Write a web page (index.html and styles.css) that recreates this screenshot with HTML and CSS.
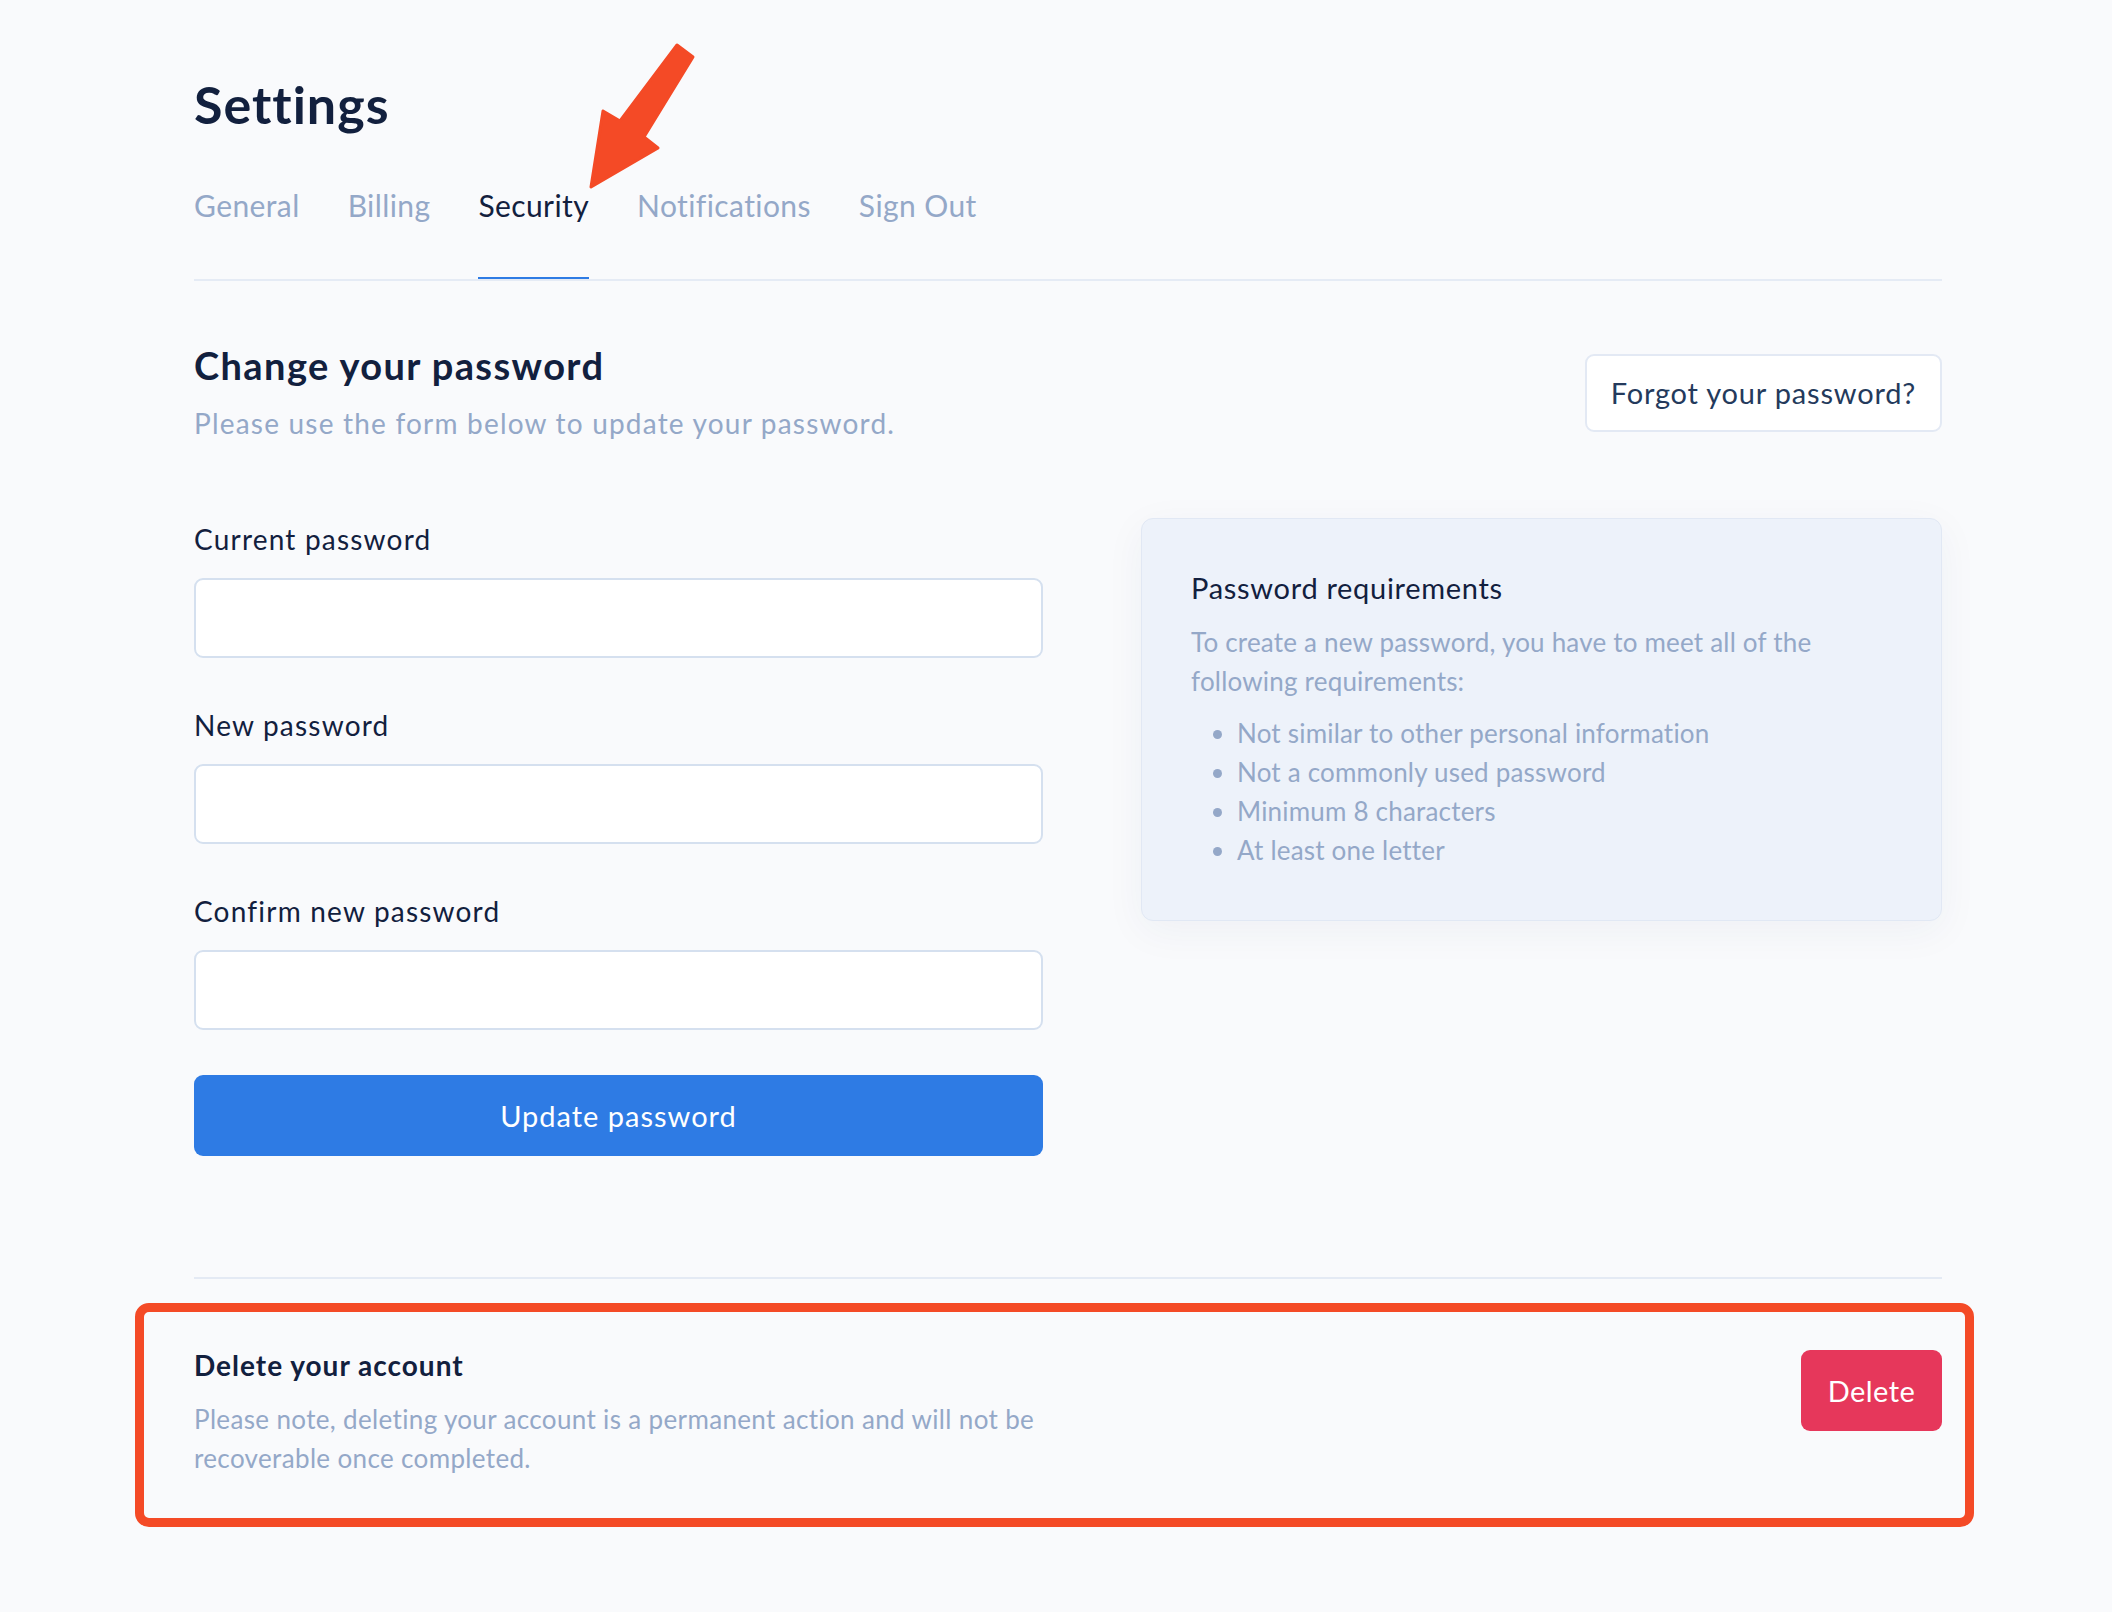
FILE: index.html
```html
<!DOCTYPE html>
<html lang="en">
<head>
<meta charset="utf-8">
<title>Settings</title>
<link rel="stylesheet" href="styles.css">
</head>
<body>
<div class="page">
  <h1 class="title">Settings</h1>
  <nav class="tabs">
    <a class="tab">General</a>
    <a class="tab">Billing</a>
    <a class="tab active">Security</a>
    <a class="tab">Notifications</a>
    <a class="tab">Sign Out</a>
  </nav>

  <div class="section-head">
    <div>
      <h2 class="section-title">Change your password</h2>
      <p class="section-sub">Please use the form below to update your password.</p>
    </div>
    <button class="btn-outline">Forgot your password?</button>
  </div>

  <div class="form-row">
    <form class="form">
      <label class="label">Current password</label>
      <input class="input" type="password">
      <label class="label">New password</label>
      <input class="input" type="password">
      <label class="label">Confirm new password</label>
      <input class="input" type="password">
      <button type="button" class="btn-primary">Update password</button>
    </form>
    <aside class="card">
      <h3 class="card-title">Password requirements</h3>
      <p class="card-text">To create a new password, you have to meet all of the following requirements:</p>
      <ul class="req-list">
        <li>Not similar to other personal information</li>
        <li>Not a commonly used password</li>
        <li>Minimum 8 characters</li>
        <li>At least one letter</li>
      </ul>
    </aside>
  </div>

  <hr class="divider">

  <div class="danger">
    <div class="danger-text">
      <h3 class="danger-title">Delete your account</h3>
      <p class="danger-sub">Please note, deleting your account is a permanent action and will not be recoverable once completed.</p>
    </div>
    <button class="btn-danger">Delete</button>
  </div>
</div>

<svg class="arrow" viewBox="570 30 140 170" width="140" height="170" aria-hidden="true">
  <polygon points="677,45 693,57 644,137 658,148 591,187 603,111 620,121" fill="#f44a26" stroke="#f44a26" stroke-width="3" stroke-linejoin="round"/>
</svg>
</body>
</html>
```

FILE: styles.css
```css
* { box-sizing: border-box; }

html, body {
  margin: 0;
  padding: 0;
  background: #f9fafc;
}

body {
  font-family: "Lato", "Open Sans", sans-serif;
  color: #12203e;
  position: relative;
  min-height: 1612px;
}

.page {
  width: 1748px;
  margin-left: 194px;
  padding-top: 74px;
}

.title {
  margin: 0;
  font-size: 52px;
  line-height: 60px;
  font-weight: 700;
  letter-spacing: 1px;
  color: #12203e;
}

.tabs {
  display: flex;
  gap: 48px;
  margin-top: 51px;
  border-bottom: 2px solid #e5ebf5;
}

.tab {
  font-size: 30px;
  line-height: 40px;
  letter-spacing: 0.4px;
  padding-bottom: 52px;
  border-bottom: 2px solid transparent;
  color: #94a8c8;
  cursor: pointer;
}

.tab.active {
  color: #12203e;
  border-bottom-color: #2e7be4;
}

.section-head {
  display: flex;
  justify-content: space-between;
  align-items: center;
  margin-top: 61px;
}

.section-title {
  margin: 0;
  font-size: 38px;
  line-height: 46px;
  font-weight: 700;
  letter-spacing: 1.4px;
  color: #12203e;
}

.section-sub {
  margin: 15px 0 0;
  font-size: 28px;
  line-height: 40px;
  letter-spacing: 1.2px;
  color: #94a8c8;
}

.btn-outline {
  font-family: inherit;
  font-size: 29px;
  line-height: 40px;
  letter-spacing: 0.8px;
  height: 78px;
  padding: 0 24px;
  background: #ffffff;
  border: 2px solid #e3e9f4;
  border-radius: 9px;
  color: #243a5c;
}

.form-row {
  display: flex;
  gap: 98px;
  align-items: flex-start;
  margin-top: 75px;
}

.form {
  width: 849px;
  display: flex;
  flex-direction: column;
}

.label {
  font-size: 28px;
  line-height: 40px;
  letter-spacing: 1.2px;
  color: #12203e;
  margin-top: 47px;
}

.label:first-child {
  margin-top: 1px;
}

.input {
  margin-top: 19px;
  height: 80px;
  border: 2px solid #d5e0ef;
  border-radius: 9px;
  background: #ffffff;
  font-family: inherit;
  font-size: 27px;
  padding: 0 20px;
}

.btn-primary {
  margin-top: 45px;
  height: 81px;
  border: none;
  border-radius: 9px;
  background: #2e7be4;
  color: #ffffff;
  font-family: inherit;
  font-size: 29px;
  letter-spacing: 1px;
}

.card {
  flex: 1;
  background: #edf2fa;
  border: 1px solid #e1e8f4;
  border-radius: 12px;
  padding: 49px 49px 50px;
  box-shadow: 0 10px 40px rgba(30, 50, 90, 0.05);
}

.card-title {
  margin: 0;
  font-size: 29px;
  line-height: 40px;
  font-weight: 400;
  letter-spacing: 0.7px;
  color: #12203e;
}

.card-text {
  margin: 15px 0 0;
  font-size: 26px;
  line-height: 38.5px;
  letter-spacing: 0.2px;
  color: #94a8c8;
}

.req-list {
  margin: 14px 0 0;
  padding-left: 46px;
  font-size: 26px;
  line-height: 39px;
  letter-spacing: 0.2px;
  color: #94a8c8;
}

.divider {
  margin: 121px 0 0;
  border: none;
  border-top: 2px solid #e4eaf4;
}

.danger {
  position: relative;
  display: flex;
  justify-content: space-between;
  align-items: flex-start;
  margin-top: 66px;
}

.danger::after {
  content: "";
  position: absolute;
  top: -42px;
  left: -59px;
  right: -32px;
  bottom: -49px;
  border: 9px solid #f44a26;
  border-radius: 14px;
  pointer-events: none;
}

.danger-text {
  width: 870px;
}

.danger-title {
  margin: 0;
  font-size: 28px;
  line-height: 40px;
  font-weight: 700;
  letter-spacing: 1px;
  color: #12203e;
}

.danger-sub {
  margin: 15px 0 0;
  font-size: 26px;
  line-height: 39px;
  letter-spacing: 0.35px;
  color: #94a8c8;
}

.btn-danger {
  margin-top: 5px;
  width: 141px;
  height: 81px;
  border: none;
  border-radius: 9px;
  background: #e6375b;
  color: #ffffff;
  font-family: inherit;
  font-size: 29px;
  letter-spacing: 0.4px;
}

.arrow {
  position: absolute;
  left: 570px;
  top: 30px;
}
```
